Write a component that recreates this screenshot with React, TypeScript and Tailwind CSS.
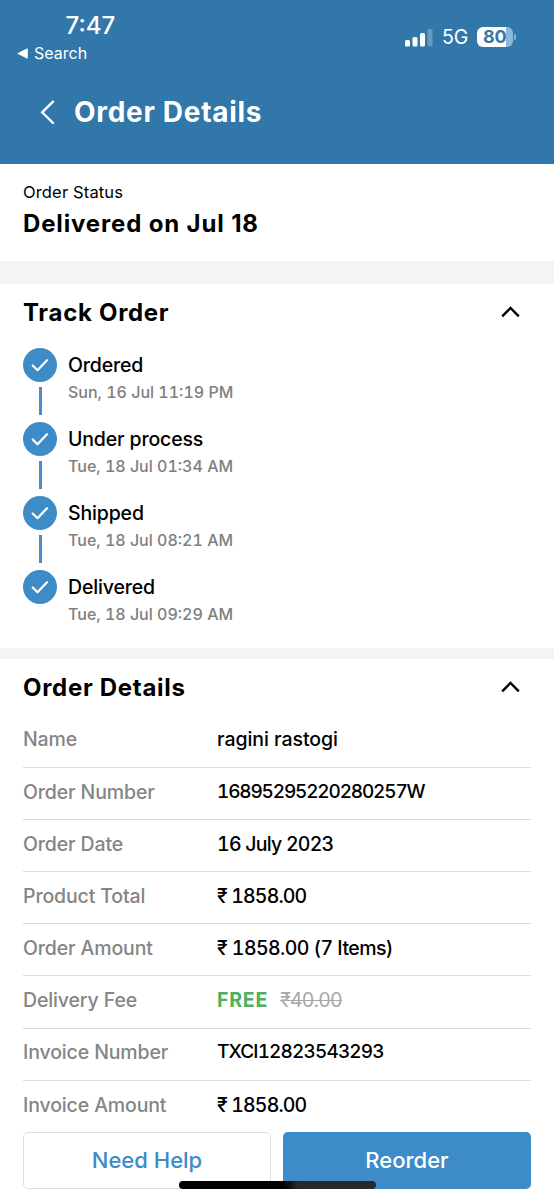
import type { ReactNode } from "react";

const steps = [
  { title: "Ordered", time: "Sun, 16 Jul 11:19 PM" },
  { title: "Under process", time: "Tue, 18 Jul 01:34 AM" },
  { title: "Shipped", time: "Tue, 18 Jul 08:21 AM" },
  { title: "Delivered", time: "Tue, 18 Jul 09:29 AM" },
];

const details: { label: string; value: ReactNode; tracking: string }[] = [
  { label: "Name", value: "ragini rastogi", tracking: "tracking-[-0.050px]" },
  { label: "Order Number", value: "16895295220280257W", tracking: "text-[19px] tracking-[-1.160px]" },
  { label: "Order Date", value: "16 July 2023", tracking: "tracking-[-0.750px]" },
  { label: "Product Total", value: "₹ 1858.00", tracking: "tracking-[-0.850px]" },
  { label: "Order Amount", value: "₹ 1858.00 (7 Items)", tracking: "tracking-[-0.570px]" },
  {
    label: "Delivery Fee",
    tracking: "tracking-normal",
    value: (
      <>
        <span className="font-bold tracking-[0.800px] text-[#4caf61]">FREE</span>
        <span className="ml-3 font-normal tracking-[-0.750px] text-[#a8a8a8] line-through decoration-1">₹40.00</span>
      </>
    ),
  },
  { label: "Invoice Number", value: "TXCI12823543293", tracking: "text-[19px] tracking-[-0.850px]" },
  { label: "Invoice Amount", value: "₹ 1858.00", tracking: "tracking-[-0.850px]" },
];

function StatusBar() {
  return (
    <div className="flex justify-between pl-[17px] pr-[38px]">
      <div className="w-[120px] pt-[10px]">
        <div className="pl-[48.500px] text-[24px] font-medium leading-[32px]">7:47</div>
        <div className="flex h-[22px] items-center gap-[6px] text-[16px]">
          <svg width="11" height="11" viewBox="0 0 11 11" fill="currentColor">
            <path d="M1 5 9.4.7Q10.8.2 10.8 1.500v8q0 1.300-1.400.8L1 6Q.4 5.500 1 5Z" />
          </svg>
          <span className="-mt-px">Search</span>
        </div>
      </div>
      <div className="flex h-[74px] items-center">
        <svg width="28" height="19" viewBox="0 0 28 19" fill="currentColor">
          <rect x="0" y="12" width="5" height="6.500" rx="1.500" />
          <rect x="7.500" y="9" width="5" height="9.500" rx="1.500" />
          <rect x="15" y="5" width="5" height="13.500" rx="1.500" />
          <rect x="22.500" y="1" width="5" height="17.500" rx="1.500" opacity="0.25" />
        </svg>
        <span className="ml-[9px] mt-[2px] w-[27px] text-[19.500px]">5G</span>
        <div className="ml-[8px] flex items-center gap-px">
          <div className="flex h-[20px] w-[36px] items-center rounded-[6px] bg-linear-to-r from-white from-80% to-[#8fb9d8] to-80% pl-[6px] text-[18px] font-bold leading-[20px] tracking-[-0.300px] text-[#3277a9]">
            80
          </div>
          <div className="h-[6px] w-[2px] rounded-r-full bg-[#8fb9d8]" />
        </div>
      </div>
    </div>
  );
}

function Check() {
  return (
    <div className="flex h-[34px] w-[34px] items-center justify-center rounded-full bg-[#3e8cc7]">
      <svg width="34" height="34" viewBox="0 0 34 34" fill="none" stroke="white" strokeWidth="2.200" strokeLinecap="round" strokeLinejoin="round">
        <path d="m9.700 17.500 4.800 4.700 9.500-10" />
      </svg>
    </div>
  );
}

function SectionTitle({ children }: { children: string }) {
  return (
    <div className="flex h-[34px] items-center justify-between pr-[11px]">
      <h2 className="text-[24px] font-bold leading-[34px] tracking-[0.700px]">{children}</h2>
      <svg className="-mt-[2px]" width="20" height="12" viewBox="0 0 20 12" fill="none" stroke="black" strokeWidth="2.400">
        <path d="m2.200 10.300 8.300-8.300 8.300 8.300" />
      </svg>
    </div>
  );
}

export default function App() {
  return (
    <div className="relative h-[1200px] w-[554px] overflow-hidden bg-white font-['Inter','Noto_Sans',sans-serif] text-black">
      <header className="h-[163.500px] bg-[#3277a9] text-white">
        <StatusBar />
        <div className="flex items-center pl-[40px] pt-[18px]">
          <svg width="15" height="24" viewBox="0 0 15 24" fill="none" stroke="currentColor" strokeWidth="2.400" strokeLinecap="round">
            <path d="M13 1.700 2.200 12.300 13 23" />
          </svg>
          <h1 className="ml-[19px] text-[28px] font-bold leading-[40px] tracking-[0.700px]">Order Details</h1>
        </div>
      </header>

      <section className="h-[97.500px] px-[23px] pt-[17px]">
        <p className="text-[16.500px] leading-[22px] tracking-[0.150px]">Order Status</p>
        <p className="mt-[4px] text-[24px] font-bold leading-[34px] tracking-[0.850px]">Delivered on Jul 18</p>
      </section>
      <div className="h-[23px] bg-[#f4f4f4]" />

      <section className="h-[364px] px-[23px] pt-[12px]">
        <SectionTitle>Track Order</SectionTitle>
        <ol className="mt-[18px]">
          {steps.map((step, i) => (
            <li key={step.title} className="flex h-[74px] gap-[11px]">
              <div className="flex flex-col items-center">
                <Check />
                {i < steps.length - 1 && <div className="mt-[5px] h-[28px] w-[3px] bg-[#4a8bc8]" />}
              </div>
              <div>
                <p className="text-[19.500px] font-medium leading-[34px] tracking-[-0.150px]">{step.title}</p>
                <p className="-mt-px text-[16px] font-medium leading-[22px] tabular-nums text-[#808080]">{step.time}</p>
              </div>
            </li>
          ))}
        </ol>
      </section>
      <div className="h-[11px] bg-[#f4f4f4]" />

      <section className="px-[23px] pt-[12px]">
        <SectionTitle>Order Details</SectionTitle>
        <dl className="mt-[11px]">
          {details.map((row) => (
            <div key={row.label} className="flex h-[52.100px] items-center border-b border-[#dcdcdc] pb-[3px] text-[19.500px] last:border-0">
              <dt className="w-[194px] font-medium tracking-[-0.130px] text-[#858585]">{row.label}</dt>
              <dd className={`font-medium tabular-nums ${row.tracking}`}>{row.value}</dd>
            </div>
          ))}
        </dl>
      </section>

      <footer className="absolute inset-x-0 bottom-0 h-[68px] bg-white px-[23px]">
        <div className="flex h-[56.500px] gap-[12px] text-[22px] font-medium">
          <button className="w-[248px] rounded-[5px] border border-[#dedede] text-[#3e8cc7]">Need Help</button>
          <button className="w-[248px] rounded-[5px] bg-[#3e8cc7] text-white">Reorder</button>
        </div>
        <div className="absolute left-[178.500px] top-[49px] h-[7.500px] w-[197.500px] rounded-full bg-linear-to-r from-black from-50% to-[#292929] to-60%" />
      </footer>
    </div>
  );
}
